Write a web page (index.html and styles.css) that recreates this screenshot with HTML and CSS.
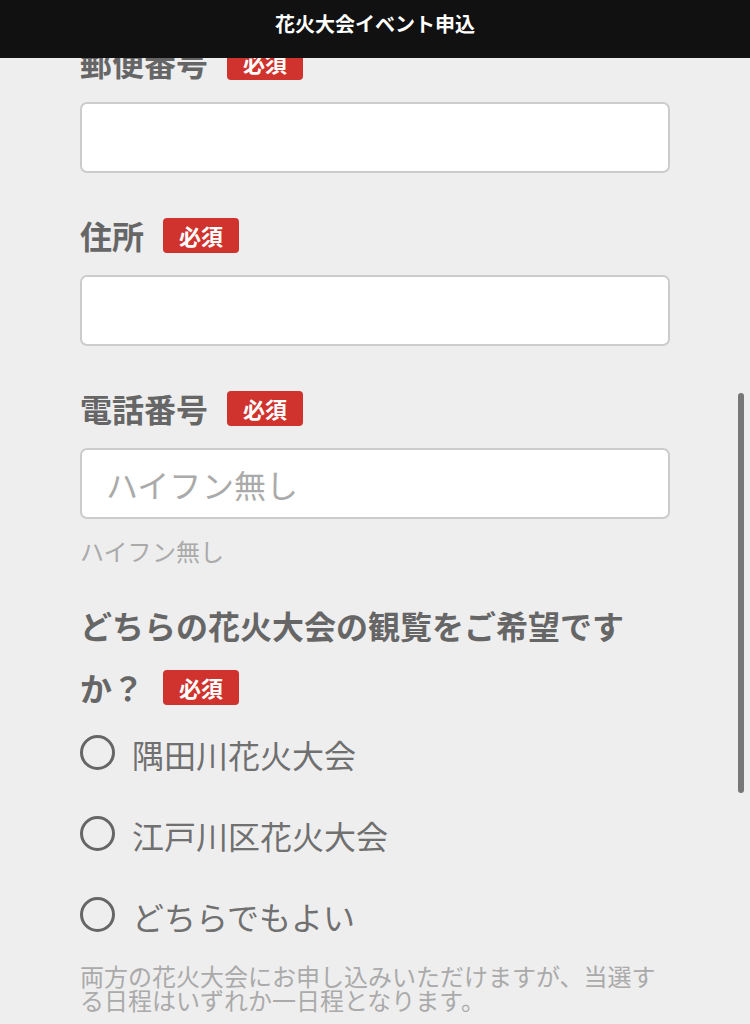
FILE: index.html
```html
<!DOCTYPE html>
<html lang="ja">
<head>
<meta charset="utf-8">
<title>花火大会イベント申込</title>
<link rel="stylesheet" href="styles.css">
</head>
<body>
<header class="topbar">
  <h1 class="topbar-title">花火大会イベント申込</h1>
</header>

<main class="form">
  <div class="field">
    <label class="field-label" for="zip">郵便番号<span class="badge">必須</span></label>
    <input class="text-input" id="zip" type="text">
  </div>

  <div class="field">
    <label class="field-label" for="addr">住所<span class="badge">必須</span></label>
    <input class="text-input" id="addr" type="text">
  </div>

  <div class="field">
    <label class="field-label" for="tel">電話番号<span class="badge">必須</span></label>
    <input class="text-input" id="tel" type="tel" placeholder="ハイフン無し">
    <p class="help">ハイフン無し</p>
  </div>

  <fieldset class="field choice">
    <legend class="field-label question">どちらの花火大会の観覧をご希望ですか？<span class="badge">必須</span></legend>
    <div class="radio-list">
      <label class="radio-row"><input class="radio" type="radio" name="event"><span>隅田川花火大会</span></label>
      <label class="radio-row"><input class="radio" type="radio" name="event"><span>江戸川区花火大会</span></label>
      <label class="radio-row"><input class="radio" type="radio" name="event"><span>どちらでもよい</span></label>
    </div>
    <p class="note">両方の花火大会にお申し込みいただけますが、当選する日程はいずれか一日程となります。</p>
  </fieldset>
</main>

<div class="scroll-thumb"></div>
</body>
</html>
```

FILE: styles.css
```css
* {
  box-sizing: border-box;
}

html, body {
  margin: 0;
  padding: 0;
}

body {
  background: #eeeeee;
  font-family: "Noto Sans CJK JP", "Noto Sans", sans-serif;
  color: #666666;
  overflow: hidden;
}

/* fixed title bar sitting over the scrolled form */
.topbar {
  position: fixed;
  top: 0;
  left: 0;
  right: 0;
  height: 58px;
  background: #111111;
  z-index: 10;
  display: flex;
  justify-content: center;
  align-items: center;
}

.topbar-title {
  margin: 0;
  color: #ffffff;
  font-size: 20px;
  font-weight: 700;
  line-height: 1;
  padding-bottom: 10px;
}

.form {
  padding: 31px 80px 40px;
}

.field {
  margin: 0 0 31px;
  padding: 0;
  border: 0;
  min-width: 0;
}

.field-label {
  display: block;
  font-size: 32px;
  font-weight: 700;
  line-height: 62px;
  color: #666666;
  margin-bottom: 9px;
  padding: 0;
}

.field-label .label-text {
  position: relative;
  top: -2px;
}

.badge {
  display: inline-block;
  vertical-align: middle;
  margin-left: 19px;
  padding: 0 16px;
  height: 35px;
  line-height: 35px;
  background: #d0322d;
  color: #ffffff;
  font-size: 22px;
  font-weight: 700;
  border-radius: 4px;
  position: relative;
  top: -5px;
}

.text-input {
  display: block;
  width: 100%;
  height: 71px;
  padding: 0 24px;
  border: 2px solid #cccccc;
  border-radius: 7px;
  background: #ffffff;
  font-family: inherit;
  font-size: 32px;
  color: #555555;
  outline: none;
}

.text-input::placeholder {
  color: #aaaaaa;
}

.help {
  margin: 20px 0 0;
  font-size: 24px;
  line-height: 24px;
  color: #aaaaaa;
}

.question {
  width: 100%;
  margin-bottom: 0;
}

.radio-list {
  display: flex;
  flex-direction: column;
  gap: 33px;
  margin-top: 12px;
}

.radio-row {
  display: flex;
  align-items: center;
  gap: 17px;
  height: 48px;
  font-size: 32px;
  color: #707070;
}

.radio {
  appearance: none;
  -webkit-appearance: none;
  margin: 0;
  width: 35px;
  height: 35px;
  border: 3.5px solid #666666;
  border-radius: 50%;
  background: transparent;
  flex: none;
  position: relative;
  top: -2px;
}

.note {
  margin: 24px 0 0;
  font-size: 24px;
  line-height: 24px;
  color: #aaaaaa;
}

/* overlay scroll indicator */
.scroll-thumb {
  position: fixed;
  left: 738px;
  top: 393px;
  width: 6px;
  height: 400px;
  border-radius: 3px;
  background: #777777;
}
```
